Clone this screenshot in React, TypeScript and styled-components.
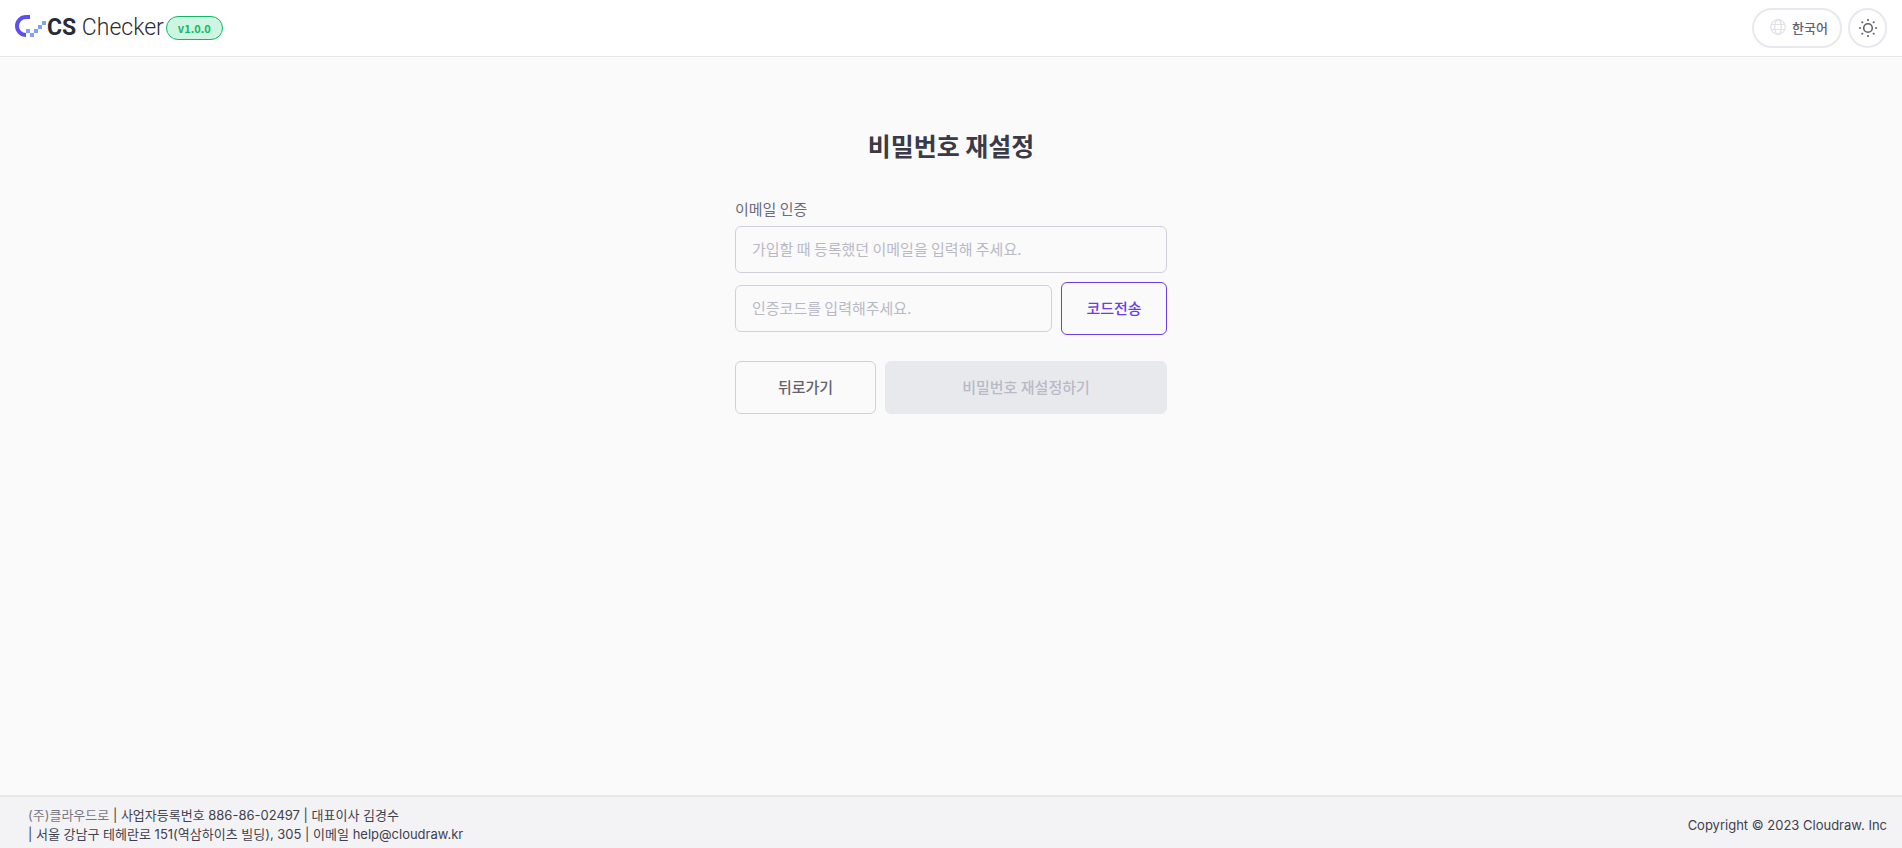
import React from "react";
import styled, { createGlobalStyle, css } from "styled-components";

const GlobalStyle = createGlobalStyle`
  * { box-sizing: border-box; }
  body {
    margin: 0;
    background: #fafafa;
    color: #3f3f4d;
    font-family: Inter, "Noto Sans CJK KR", sans-serif;
  }
  button, input { font-family: "Noto Sans CJK KR", sans-serif; }
`;

const Page = styled.div`
  display: flex;
  flex-direction: column;
  min-height: 100vh;
`;

const Header = styled.header`
  display: flex;
  align-items: center;
  justify-content: space-between;
  padding: 8px 15px;
  background: #ffffff;
  border-bottom: 1px solid #e6e7eb;
`;

const Brand = styled.div`
  display: flex;
  align-items: center;
  gap: 2px;
`;

const Logo = styled.a`
  display: flex;
  align-items: center;
  gap: 1px;
  color: #2b2b33;
  font: 300 23px/28px Roboto, sans-serif;
  text-decoration: none;

  strong { font-weight: 700; }
`;

const Version = styled.span`
  padding: 0 11px;
  border: 1px solid #12b76a;
  border-radius: 12px;
  background: #cdf5e1;
  color: #12b76a;
  font: 600 11px/22px "Noto Sans CJK KR", sans-serif;
`;

const Tools = styled.div`
  display: flex;
  gap: 6px;
`;

const ToolButton = styled.button<{ $round?: boolean }>`
  display: flex;
  align-items: center;
  justify-content: center;
  gap: 6px;
  height: 40px;
  padding: ${(p) => (p.$round ? "0" : "0 12px 2px 16px")};
  width: ${(p) => (p.$round ? "39px" : "auto")};
  border: 2px solid #e8e8ee;
  border-radius: 20px;
  background: #ffffff;
  color: #62626f;
  font-size: 13px;
  font-weight: 500;
`;

const Main = styled.main`
  flex: 1;
  padding: 70px 16px 32px;
`;

const Form = styled.form`
  display: flex;
  flex-direction: column;
  max-width: 432px;
  margin: 0 auto;
`;

const Title = styled.h1`
  margin: 0 0 34px;
  color: #3a3a48;
  font: 700 25px/36px "Noto Sans CJK KR", sans-serif;
  text-align: center;
`;

const Label = styled.label`
  margin-bottom: 5px;
  color: #6b6b7b;
  font: 400 15px/24px "Noto Sans CJK KR", sans-serif;
`;

const CodeRow = styled.div`
  display: grid;
  grid-template-columns: 1fr 106px;
  align-items: center;
  gap: 9px;
  margin-top: 9px;
`;

const Actions = styled.div`
  display: grid;
  grid-template-columns: 1fr 2fr;
  gap: 9px;
  margin-top: 26px;
`;

const TextInput = styled.input`
  width: 100%;
  height: 47px;
  padding: 0 16px 2px;
  border: 1px solid #d0d0dc;
  border-radius: 6px;
  background: transparent;
  color: #3f3f4d;
  font-size: 15px;

  &::placeholder { color: #b9b9c6; opacity: 1; }
`;

const variants = {
  primary: css`
    border-color: #6a3de8;
    color: #6a3de8;
  `,
  plain: css`
    border-color: #d0d0dc;
    color: #62626f;
  `,
  disabled: css`
    border-color: #e8e9ed;
    background: #e8e9ed;
    color: #b9b9c6;
  `,
};

const Button = styled.button<{ $variant: keyof typeof variants }>`
  height: 53px;
  padding: 0 0 2px;
  border: 1px solid;
  border-radius: 6px;
  background: transparent;
  font-size: 15px;
  font-weight: 500;
  ${(p) => variants[p.$variant]}
`;

const Footer = styled.footer`
  display: flex;
  align-items: center;
  justify-content: space-between;
  padding: 9px 15px 4px 28px;
  border-top: 2px solid #e7e8ea;
  background: #f3f3f6;
  font-size: 13px;
  line-height: 19px;
`;

const Company = styled.address`
  font-style: normal;
`;

const CompanyName = styled.span`
  color: #77777f;
`;

function LogoMark() {
  return (
    <svg width="31" height="26" viewBox="0 0 31 26" aria-hidden="true">
      <path d="M15 2H11A9 9 0 0 0 11 20" fill="none" stroke="#5b50ee" strokeWidth="4" />
      <g fill="#7ea2f7">
        <rect x="11" y="14" width="4" height="4" />
        <rect x="15" y="18" width="4" height="4" />
        <rect x="19" y="14" width="4" height="4" />
        <rect x="23" y="10" width="4" height="4" />
        <rect x="27" y="6" width="4" height="4" />
      </g>
    </svg>
  );
}

function GlobeIcon() {
  return (
    <svg width="16" height="16" viewBox="0 0 16 16" fill="none" stroke="#e0e0e8" strokeWidth="1.200" aria-hidden="true">
      <circle cx="8" cy="8" r="7.300" />
      <ellipse cx="8" cy="8" rx="3.300" ry="7.300" />
      <path d="M1.300 5.500h13.400M1.300 10.500h13.400" />
    </svg>
  );
}

function SunIcon() {
  return (
    <svg width="20" height="20" viewBox="0 0 20 20" fill="none" stroke="#62626f" strokeWidth="1.600" aria-hidden="true">
      <circle cx="10" cy="10" r="4.300" />
      <path d="M10 1v2M10 17v2M1 10h2M17 10h2M3.600 3.600L5 5M15 15l1.400 1.400M3.600 16.400L5 15M15 5l1.400-1.400" />
    </svg>
  );
}

export default function App() {
  return (
    <Page>
      <GlobalStyle />
      <Header>
        <Brand>
          <Logo href="#">
            <LogoMark />
            <span><strong>CS</strong> Checker</span>
          </Logo>
          <Version>v1.0.0</Version>
        </Brand>
        <Tools>
          <ToolButton type="button"><GlobeIcon />한국어</ToolButton>
          <ToolButton type="button" $round aria-label="테마"><SunIcon /></ToolButton>
        </Tools>
      </Header>
      <Main>
        <Form>
          <Title>비밀번호 재설정</Title>
          <Label htmlFor="email">이메일 인증</Label>
          <TextInput id="email" type="email" placeholder="가입할 때 등록했던 이메일을 입력해 주세요." />
          <CodeRow>
            <TextInput aria-label="인증코드" placeholder="인증코드를 입력해주세요." />
            <Button type="button" $variant="primary">코드전송</Button>
          </CodeRow>
          <Actions>
            <Button type="button" $variant="plain">뒤로가기</Button>
            <Button type="submit" $variant="disabled" disabled>비밀번호 재설정하기</Button>
          </Actions>
        </Form>
      </Main>
      <Footer>
        <Company>
          <CompanyName>(주)클라우드로</CompanyName> | 사업자등록번호 886-86-02497 | 대표이사 김경수
          <br />| 서울 강남구 테헤란로 151(역삼하이츠 빌딩), 305 | 이메일 help@cloudraw.kr
        </Company>
        <span>Copyright © 2023 Cloudraw. Inc</span>
      </Footer>
    </Page>
  );
}
